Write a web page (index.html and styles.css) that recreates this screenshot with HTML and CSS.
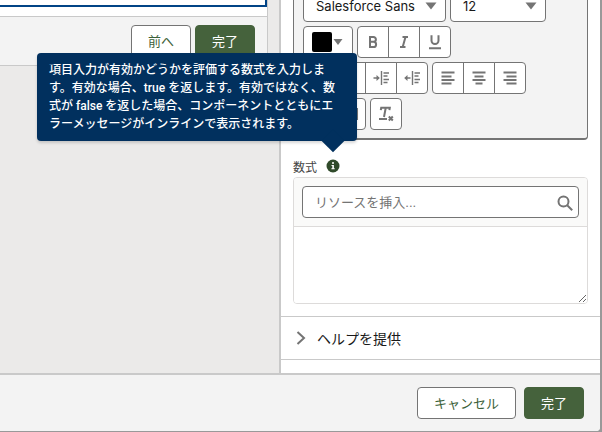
FILE: index.html
```html
<!DOCTYPE html>
<html lang="ja">
<head>
  <meta charset="UTF-8" />
  <title>画面要素の編集</title>
  <link rel="stylesheet" href="styles.css">
</head>
<body>

  <div class="modal">
    <div class="content">
      <main class="canvas">
        <div class="screen-card">
          <div class="screen-body"><div class="selected-field"></div></div>
          <div class="screen-footer">
            <button class="btn">前へ</button>
            <button class="btn brand">完了</button>
          </div>
        </div>
      </main>

      <aside class="panel">
        <div class="toolbar">
          <div class="toolbar-row">
            <div class="picker font-picker">
              <select aria-label="フォント"><option>Salesforce Sans</option></select>
              <svg class="caret" viewBox="0 0 12 8"><path d="M0.5 0.5h11L6 7.5z"/></svg>
            </div>
            <div class="picker size-picker">
              <select aria-label="サイズ"><option>12</option></select>
              <svg class="caret" viewBox="0 0 12 8"><path d="M0.5 0.5h11L6 7.5z"/></svg>
            </div>
          </div>

          <div class="toolbar-row">
            <button class="color-btn" aria-label="色">
              <span class="swatch"></span>
              <svg class="small-caret" viewBox="0 0 10 6"><path d="M0.5 0h9L5 6z"/></svg>
            </button>
            <div class="group">
              <button aria-label="太字">
                <svg viewBox="0 0 16 16"><path class="line" d="M4 3h4.500a2.300 2.300 0 0 1 0 4.800H4.500M5 3v10M8.500 7.800a2.600 2.600 0 0 1 0 5.200H4"/></svg>
              </button>
              <button aria-label="斜体">
                <svg viewBox="0 0 16 16"><path class="line" d="M6.500 3h5.500M4 13h5.500M9.500 3L6.700 13"/></svg>
              </button>
              <button aria-label="下線">
                <svg viewBox="0 0 16 16"><path class="line" d="M3.500 2.200h2M10.500 2.200h2M4.500 2v4.500a3.500 3.500 0 0 0 7 0V2M2 14.200h12"/></svg>
              </button>
            </div>
          </div>

          <div class="toolbar-row">
            <div class="group">
              <button aria-label="箇条書き">
                <svg viewBox="0 0 16 16"><path class="line" d="M1 3h2M5 3h10M1 8h2M5 8h10M1 13h2M5 13h10"/></svg>
              </button>
              <button aria-label="番号付きリスト">
                <svg viewBox="0 0 16 16"><path class="line" d="M2 1v4M6 3h9M1 8h2M6 8h9M1 13h2M6 13h9"/></svg>
              </button>
              <button aria-label="インデント">
                <svg viewBox="0 0 16 16"><path class="thin" d="M8.500 1v14M0.500 8h5M10.500 3h5.500M10.500 6h4M10.500 9.500h5.500M10.500 12.500h4"/><path d="M3.500 5L6.800 8l-3.300 3z"/></svg>
              </button>
              <button aria-label="アウトデント">
                <svg viewBox="0 0 16 16"><path class="thin" d="M8.500 1v14M2 8h4.500M10.500 3h5.500M10.500 6h4M10.500 9.500h5.500M10.500 12.500h4"/><path d="M3.500 5L0.200 8l3.300 3z"/></svg>
              </button>
            </div>
            <div class="group">
              <button aria-label="左揃え">
                <svg viewBox="0 0 16 16"><path class="line" d="M1.500 2.500h13M1.500 6.500h10M1.500 10h13M1.500 13.500h10"/></svg>
              </button>
              <button aria-label="中央揃え">
                <svg viewBox="0 0 16 16"><path class="line" d="M1.500 2.500h13M3.500 6.500h9M1.500 10h13M4.500 13.500h7"/></svg>
              </button>
              <button aria-label="右揃え">
                <svg viewBox="0 0 16 16"><path class="line" d="M1.500 2.500h13M4.500 6.500h10M1.500 10h13M4.500 13.500h10"/></svg>
              </button>
            </div>
          </div>

          <div class="toolbar-row">
            <div class="group">
              <button aria-label="リンク">
                <svg viewBox="0 0 16 16"><path class="line" d="M7 5H4a3 3 0 0 0 0 6h3M9 5h3a3 3 0 0 1 0 6H9M5 8h6"/></svg>
              </button>
              <button aria-label="画像">
                <svg viewBox="0 0 16 16"><path class="line" d="M1 3h14v10H1zM3 11l3-4 3 3 2-2 2 3"/></svg>
              </button>
            </div>
            <div class="group">
              <button aria-label="書式を削除">
                <svg viewBox="0 0 16 16"><path class="line" d="M2.800 4.200L3.200 1.800h8.600l-0.400 2.400M7.700 2L6 11M1 13h8"/><path class="line" d="M10.800 10.500l4 4M14.800 10.500l-4 4"/></svg>
              </button>
            </div>
          </div>
        </div>

        <div class="field">
          <div class="field-label">
            <label for="formula">数式</label>
            <span class="help">
              <button class="info" aria-label="ヘルプ" aria-describedby="formulaHelp">
                <svg viewBox="0 0 14 14"><circle cx="7" cy="7" r="6.500"/><path class="mark" d="M6 3.200h2v1.600H6zM5.500 6h2.400v3.200h0.800v1.100H5.400V9.200h0.900V7H5.500z"/></svg>
              </button>
              <span class="tooltip" role="tooltip" id="formulaHelp">項目入力が有効かどうかを評価する数式を入力します。有効な場合、true を返します。有効ではなく、数式が false を返した場合、コンポーネントとともにエラーメッセージがインラインで表示されます。</span>
            </span>
          </div>
          <div class="formula">
            <div class="resource">
              <input type="text" placeholder="リソースを挿入..." aria-label="リソースを挿入">
              <svg class="search" viewBox="0 0 16 16"><circle cx="6.500" cy="6.500" r="5"/><path d="M10.200 10.200l5 5"/></svg>
            </div>
            <textarea id="formula"></textarea>
          </div>
        </div>

        <button class="section" aria-expanded="false">
          <svg viewBox="0 0 10 14"><path d="M1.500 1l6.500 6-6.500 6"/></svg>
          ヘルプを提供
        </button>
      </aside>
    </div>

    <footer class="modal-footer">
      <button class="btn">キャンセル</button>
      <button class="btn brand">完了</button>
    </footer>
  </div>

</body>
</html>
```
FILE: styles.css
```css
* {
  box-sizing: border-box;
}

body {
  margin: 0;
  padding: 0 2px 1px 0;
  height: 100vh;
  overflow: hidden;
  background: #999;
  color: #181818;
  font-family: "Liberation Sans", "Noto Sans CJK JP", sans-serif;
  font-size: 13px;
}

button, input, select, textarea {
  margin: 0;
  font: inherit;
  color: inherit;
}

.modal {
  height: 100%;
  display: flex;
  flex-direction: column;
  overflow: hidden;
  background: #fff;
  border-radius: 0 0 4px 0;
}

.content {
  flex: 1;
  min-height: 0;
  display: flex;
}

.canvas {
  flex: 1;
  background: #ebeae9;
  padding-right: 11px;
}

.screen-card {
  background: #fff;
  border: solid #c9c9c9;
  border-width: 0 1px 1px 0;
}

.screen-body {
  height: 16px;
}

.selected-field {
  height: 7px;
  border: solid #014486;
  border-width: 0 2px 2px 0;
}

.screen-footer {
  display: flex;
  justify-content: flex-end;
  gap: 4px;
  padding: 8px 12px;
  background: #f3f3f3;
  border-top: 1px solid #c9c9c9;
}

.btn {
  height: 32px;
  padding: 0 16px 2px;
  border: 1px solid #747474;
  border-radius: 4px;
  background: #fff;
  color: #3c6139;
  white-space: nowrap;
}

.btn.brand {
  background: #45623c;
  border-color: #45623c;
  color: #fff;
}

.panel {
  flex: 0 0 321px;
  border-left: 2px solid #c9c9c9;
  background: #fff;
}

.toolbar {
  margin: -19px 12px 0;
  padding: 8px 9px;
  display: flex;
  flex-direction: column;
  gap: 4px;
  background: #f3f3f3;
  border: 1px solid #747474;
  border-bottom-width: 2px;
  border-radius: 4px;
}

.toolbar-row {
  display: flex;
  gap: 4px;
}

.picker {
  position: relative;
  height: 32px;
}

.font-picker {
  width: 143px;
}

.size-picker {
  width: 96px;
}

.picker select {
  width: 100%;
  height: 100%;
  padding: 0 12px;
  appearance: none;
  background: #fff;
  border: 1px solid #747474;
  border-radius: 4px;
  font-family: Inter, sans-serif;
}

.caret {
  position: absolute;
  top: 12px;
  right: 9px;
  width: 12px;
  height: 8px;
  fill: #747474;
  pointer-events: none;
}

.color-btn {
  width: 50px;
  height: 32px;
  padding: 0 8px;
  display: flex;
  align-items: center;
  gap: 1px;
  background: #fff;
  border: 1px solid #747474;
  border-radius: 4px;
}

.swatch {
  width: 20px;
  height: 20px;
  background: #000;
  border-radius: 2px;
}

.small-caret {
  width: 10px;
  height: 6px;
  fill: #747474;
}

.group {
  display: flex;
}

.group button {
  width: 32px;
  height: 32px;
  padding: 0;
  display: flex;
  align-items: center;
  justify-content: center;
  background: #fff;
  border: 1px solid #747474;
}

.group button + button {
  margin-left: -1px;
}

.group button:first-child {
  border-top-left-radius: 4px;
  border-bottom-left-radius: 4px;
}

.group button:last-child {
  border-top-right-radius: 4px;
  border-bottom-right-radius: 4px;
}

.group svg {
  width: 16px;
  height: 16px;
  fill: #747474;
}

.group .line {
  fill: none;
  stroke: #747474;
  stroke-width: 2;
}

.group .thin {
  fill: none;
  stroke: #747474;
  stroke-width: 1.4;
}

.field {
  margin: 15px 12px 12px;
}

.field-label {
  height: 22px;
  display: flex;
  align-items: center;
  gap: 9px;
  color: #444;
  font-size: 12px;
}

.help {
  position: relative;
  display: flex;
}

.info {
  width: 14px;
  height: 14px;
  padding: 0;
  display: flex;
  border: none;
  background: none;
}

.info svg {
  fill: #304a2a;
}

.info .mark {
  fill: #fff;
}

.tooltip {
  position: absolute;
  right: -17px;
  bottom: 32px;
  width: 320px;
  padding: 8px 12px;
  background: #01305e;
  color: #fff;
  border-radius: 4px;
  box-shadow: 0 2px 3px rgba(0, 0, 0, 0.16);
  font-family: Roboto, "Noto Sans CJK JP", sans-serif;
  font-weight: 500;
  line-height: 18px;
}

.tooltip::after {
  content: "";
  position: absolute;
  right: 16px;
  bottom: -8px;
  width: 16px;
  height: 16px;
  background: #01305e;
  transform: rotate(45deg);
}

.formula {
  border: 1px solid #dddbda;
  border-radius: 4px;
  overflow: hidden;
}

.resource {
  position: relative;
  padding: 8px;
  background: #fafaf9;
  border-bottom: 1px solid #dddbda;
}

.resource input {
  display: block;
  width: 100%;
  height: 32px;
  padding: 0 32px 0 12px;
  border: 1px solid #747474;
  border-radius: 4px;
  background: #fff;
}

.resource input::placeholder {
  color: #747474;
}

.search {
  position: absolute;
  top: 17px;
  right: 14px;
  width: 16px;
  height: 16px;
  fill: none;
  stroke: #747474;
  stroke-width: 2;
}

.formula textarea {
  display: block;
  width: 100%;
  height: 76px;
  padding: 8px 12px;
  border: none;
  background: #fff;
  resize: vertical;
}

.section {
  width: 100%;
  height: 44px;
  padding: 0 15px;
  display: flex;
  align-items: center;
  gap: 11px;
  border: solid #c9c9c9;
  border-width: 1px 0;
  background: #fff;
  font-size: 14px;
}

.section svg {
  width: 10px;
  height: 14px;
  fill: none;
  stroke: #747474;
  stroke-width: 2;
}

.modal-footer {
  display: flex;
  justify-content: flex-end;
  gap: 8px;
  padding: 12px 16px;
  background: #f3f3f3;
  border-top: 2px solid #c9c9c9;
}
```
